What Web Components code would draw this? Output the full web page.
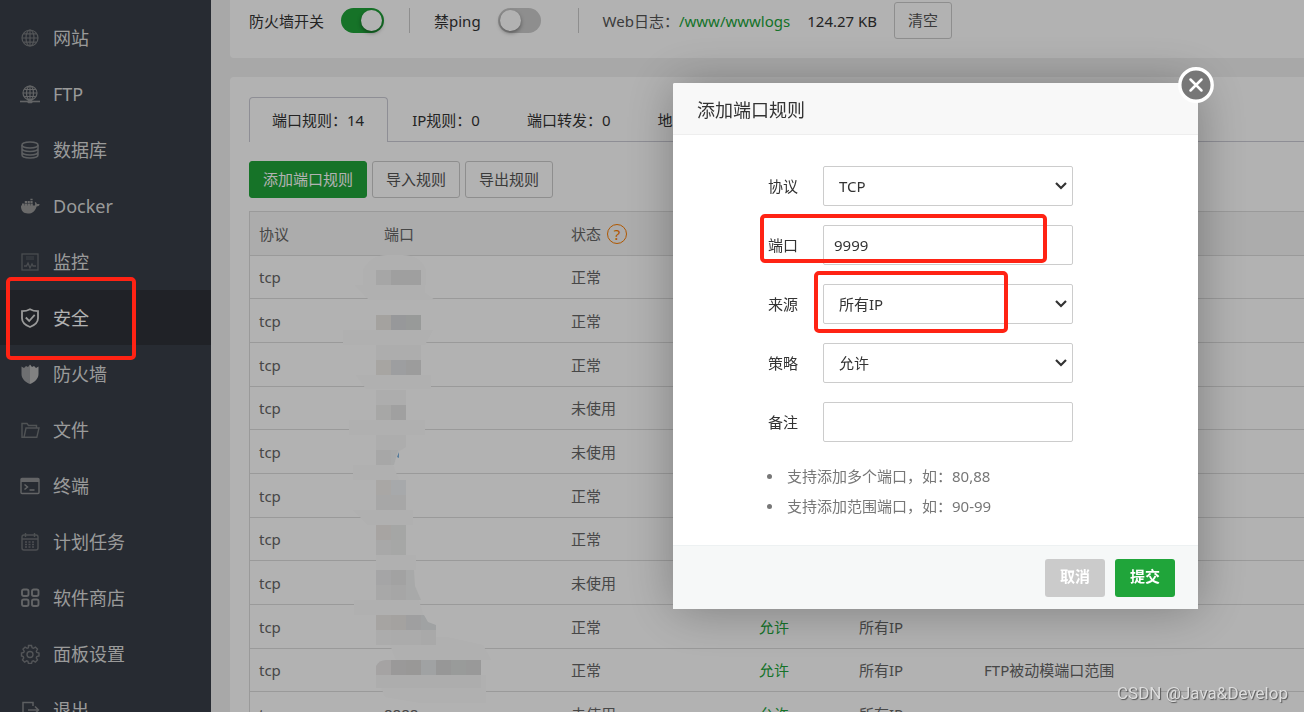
<!DOCTYPE html>
<html lang="zh-CN">
<head>
<meta charset="utf-8">
<title>安全</title>
<style>
    body {
        margin: 0;
        height: 100vh;
        overflow: hidden;
        background: #f1f1f1;
        color: #333;
        font: 15px/20px "Noto Sans", "Noto Sans CJK SC", sans-serif;
    }

    .layout {
        display: flex;
        height: 100%;
    }

    main {
        flex: 1;
        min-width: 0;
        display: flex;
        flex-direction: column;
        gap: 19px;
        padding-left: 19px;
    }

    .panel {
        flex: 1;
        background: #fff;
        border-radius: 4px 0 0 0;
        padding: 20px 0 0 19px;
    }

    .tools {
        display: flex;
        gap: 5px;
        padding: 19px 0 13px;
    }

    .mask {
        position: fixed;
        inset: 0;
        background: rgba(0, 0, 0, 0.3);
    }
</style>
</head>
<body>
<div class="layout">
    <side-nav></side-nav>
    <main>
        <firewall-bar></firewall-bar>
        <section class="panel">
            <tab-bar></tab-bar>
            <div class="tools">
                <bt-button primary>添加端口规则</bt-button>
                <bt-button>导入规则</bt-button>
                <bt-button>导出规则</bt-button>
            </div>
            <rule-table></rule-table>
        </section>
    </main>
</div>
<div class="mask"></div>
<layer-dialog heading="添加端口规则">
    <form-line name="协议" type="select" value="TCP"></form-line>
    <form-line name="端口" type="text" value="9999"></form-line>
    <form-line name="来源" type="select" value="所有IP"></form-line>
    <form-line name="策略" type="select" value="允许"></form-line>
    <form-line name="备注" type="text" value=""></form-line>
    <tip-list slot="tips"></tip-list>
</layer-dialog>
<mark-box x="6" y="277" w="130" h="83"></mark-box>
<mark-box x="760" y="214" w="287" h="49"></mark-box>
<mark-box x="814" y="271" w="194" h="62"></mark-box>
<water-mark>CSDN @Java&amp;Develop</water-mark>

<script>
"use strict";
{
    /** 20x20 icons of the side menu */
    const icons = {
        site: `<g stroke-width="1.2"><circle cx="10" cy="10" r="8"/><ellipse cx="10" cy="10" rx="4" ry="8"/><path d="M10 2v16M2 10h16M3.5 5.8h13M3.5 14.2h13"/></g>`,
        ftp: `<g stroke-width="1.2"><circle cx="10" cy="9" r="7"/><ellipse cx="10" cy="9" rx="3.5" ry="7"/><path d="M10 2v14M3 9h14M4.2 5.5h11.6M4.2 12.5h11.6"/></g><path d="M0 17.5h20" stroke-width="1.6"/><rect x="7.5" y="16" width="5" height="3.2" rx="1" fill="currentColor" stroke="none"/>`,
        database: `<g stroke-width="1.5"><ellipse cx="10" cy="5" rx="8" ry="3"/><path d="M2 5v10c0 1.7 3.6 3 8 3s8-1.3 8-3V5M2 8.5c0 1.7 3.6 3 8 3s8-1.3 8-3M2 12c0 1.7 3.6 3 8 3s8-1.3 8-3"/></g>`,
        docker: `<path fill="currentColor" stroke="none" d="M1 9.6h13.8c.6-.8.5-2-.1-2.900l.9-.6c.8.6 1.2 1.3 1.3 2.100 1-.2 2-.1 2.900.4-.6 1.300-1.700 1.800-3.200 1.800C15.200 15 12.600 17.500 8 17.500c-4.500 0-7.200-2.300-7-7.900zM2 7.400h2.400v2.400H2zM4.800 7.400h2.400v2.400H4.800zM7.600 7.400H10v2.400H7.600zM10.400 7.400h2.400v2.400h-2.400zM4.800 4.900H7v2H4.800zM7.600 4.900h2.200v2H7.600zM10.400 4.900h2.200v2h-2.200zM10.400 2.800h2.200v1.500h-2.200z"/>`,
        monitor: `<g stroke-width="1.3"><rect x="2" y="2" width="16" height="16"/><path d="M6 5h8M6 7h8" stroke-opacity=".5"/><path d="M4 14h2.500l1.500-3 2 5 2-4 1 2h3"/></g>`,
        safe: `<g stroke-width="1.8"><path d="M10 1.200c2.300 1.400 5 2 8 2v7c0 4.200-4 7.200-8 8.800-4-1.600-8-4.600-8-8.800v-7c3 0 5.700-.6 8-2z"/><path d="M5.800 9.500l3.400 3.500 5.500-6.200"/></g>`,
        wall: `<g fill="currentColor" stroke="none"><path opacity=".78" d="M10 .5V20C5 18 1.500 14.500 1.500 10V2.500L4 4l2-2 2 1z"/><path d="M10 .5V20c5-2 8.500-5.500 8.500-10V2.500L16 4l-2-2-2 1z"/></g>`,
        files: `<path stroke-width="1.4" d="M4 17.300H2V3.500h5l1.500 2h8V8M4 17.300L6 8h13l-2.200 9.300z"/>`,
        terminal: `<rect x="1" y="2.500" width="18" height="15" rx="1" stroke-width="1.4"/><path d="M1 2.500h18V6H1z" fill="currentColor" stroke="none"/><path d="M4.500 8.500l3 2.500-3 2.500M9.500 14h5" stroke-width="1.500"/>`,
        cron: `<g stroke-width="1.4"><rect x="2" y="3" width="16" height="15" rx="2"/><path d="M2 7h16M5.500 1v4M14.500 1v4"/><path stroke-dasharray="2 1.500" d="M5 10h10.500M5 12.500h10.500M5 15h10.500"/></g>`,
        soft: `<g stroke-width="1.900"><rect x="2" y="1.500" width="6.500" height="6.500" rx="1.700"/><rect x="12" y="1.500" width="6.500" height="6.500" rx="1.700"/><rect x="2" y="11.500" width="6.500" height="6.500" rx="1.700"/><rect x="12" y="11.500" width="6.500" height="6.500" rx="1.700"/></g>`,
        config: `<g stroke-width="1.400"><path d="M8.500 1.500h3l.6 2.300 1.300.5 2-1.200 2.100 2.100-1.200 2 .5 1.300 2.200.500v3l-2.200.6-.5 1.300 1.200 2-2.100 2.100-2-1.200-1.300.5-.6 2.200h-3l-.6-2.200-1.300-.5-2 1.200-2.100-2.100 1.200-2-.5-1.300L1.500 12V9l2.200-.5.5-1.300-1.200-2 2.100-2.100 2 1.200 1.300-.5z"/><circle cx="10" cy="10.500" r="3"/></g>`,
        exit: `<path stroke-width="1.500" d="M13 6V2.500H3v15h10V14M8 10h10M15 6.500l3.500 3.500-3.500 3.500"/>`,
    };

    const menu = [
        ["site", "网站", "#787b7e"],
        ["ftp", "FTP", "#8e9092"],
        ["database", "数据库", "#85888b"],
        ["docker", "Docker", "#999"],
        ["monitor", "监控", "#6a6e73"],
        ["safe", "安全", "#ddd"],
        ["wall", "防火墙", "#bbb"],
        ["files", "文件", "#73777a"],
        ["terminal", "终端", "#8e9092"],
        ["cron", "计划任务", "#6e7276"],
        ["soft", "软件商店", "#8e9092"],
        ["config", "面板设置", "#777a7e"],
        ["exit", "退出", "#85888b"],
    ];

    class SideNav extends HTMLElement {
        constructor() {
            super();
            const active = "safe";
            this.attachShadow({ mode: "open" }).innerHTML = /* html */ `
                <style>
                    :host {
                        display: block;
                        flex: 0 0 211px;
                        background: #383e48;
                        overflow: hidden;
                    }
                    nav {
                        display: flex;
                        flex-direction: column;
                        gap: 1px;
                        padding-top: 10px;
                    }
                    a {
                        display: flex;
                        align-items: center;
                        gap: 13px;
                        flex: none;
                        height: 55px;
                        padding-left: 20px;
                        color: #ddd;
                        font-size: 18px;
                        line-height: 24px;
                        text-decoration: none;
                    }
                    a.active {
                        background: #2e3238;
                        color: #fff;
                    }
                </style>
                <nav>
                    ${menu
                        .map(
                            ([icon, text, color]) => `
                    <a href="#${icon}" class="${icon === active ? "active" : ""}">
                        <svg width="20" height="20" viewBox="0 0 20 20" fill="none" stroke="currentColor" style="color: ${color}">${icons[icon]}</svg>
                        <span>${text}</span>
                    </a>`,
                        )
                        .join("")}
                </nav>
            `;
        }
    }

    class ToggleSwitch extends HTMLElement {
        constructor() {
            super();
            const checked = this.hasAttribute("on") ? "checked" : "";
            this.attachShadow({ mode: "open" }).innerHTML = /* html */ `
                <style>
                    :host { display: block; }
                    label {
                        display: flex;
                        align-items: center;
                        gap: 17px;
                    }
                    input {
                        appearance: none;
                        display: flex;
                        width: 43px;
                        height: 25px;
                        margin: 0;
                        padding: 2px;
                        box-sizing: border-box;
                        border-radius: 13px;
                        background: #ccc;
                    }
                    input::before {
                        content: "";
                        width: 21px;
                        height: 21px;
                        border-radius: 50%;
                        background: #fff;
                        box-shadow: 0 2px 4px rgba(0, 0, 0, 0.4);
                    }
                    input:checked {
                        background: #20a53a;
                        justify-content: flex-end;
                    }
                </style>
                <label><slot></slot><input type="checkbox" ${checked}></label>
            `;
        }
    }

    class BtButton extends HTMLElement {
        constructor() {
            super();
            this.attachShadow({ mode: "open" }).innerHTML = /* html */ `
                <style>
                    :host { display: block; }
                    button {
                        display: block;
                        height: 37px;
                        padding: 0 13px 2px;
                        border: 1px solid #ccc;
                        border-radius: 3px;
                        background: #fff;
                        color: #555;
                        font: inherit;
                        white-space: nowrap;
                    }
                    :host([primary]) button {
                        border-color: #20a53a;
                        background: #20a53a;
                        color: #fff;
                    }
                </style>
                <button type="button"><slot></slot></button>
            `;
        }
    }

    class FirewallBar extends HTMLElement {
        constructor() {
            super();
            this.attachShadow({ mode: "open" }).innerHTML = /* html */ `
                <style>
                    :host {
                        display: flex;
                        align-items: center;
                        padding: 2px 0 19px 19px;
                        border-radius: 0 0 0 4px;
                        background: #fff;
                        white-space: nowrap;
                    }
                    .line {
                        width: 1px;
                        height: 25px;
                        margin: 0 24px 0 25px;
                        background: #ccc;
                    }
                    .wide { margin-left: 37px; }
                    a {
                        color: #20a53a;
                        text-decoration: none;
                        margin-right: 17px;
                    }
                    .size { margin-right: 17px; }
                    .log { color: #555; }
                </style>
                <toggle-switch on>防火墙开关</toggle-switch>
                <span class="line"></span>
                <toggle-switch>禁ping</toggle-switch>
                <span class="line wide"></span>
                <span class="log">Web日志：</span>
                <a href="#logs">/www/wwwlogs</a>
                <span class="size">124.27 KB</span>
                <bt-button>清空</bt-button>
            `;
        }
    }

    class TabBar extends HTMLElement {
        constructor() {
            super();
            const tabs = ["端口规则：14", "IP规则：0", "端口转发：0", "地"];
            this.attachShadow({ mode: "open" }).innerHTML = /* html */ `
                <style>
                    :host {
                        display: flex;
                        box-shadow: inset 0 -1px #ccccd6;
                    }
                    button {
                        height: 45px;
                        padding: 0 23px 0 24px;
                        border: 0;
                        background: none;
                        color: #333;
                        font: inherit;
                        white-space: nowrap;
                    }
                    button.on {
                        padding: 0 23px 0 22px;
                        border: 1px solid #ccccd6;
                        border-bottom: 0;
                        border-radius: 4px 4px 0 0;
                        background: #fff;
                    }
                </style>
                ${tabs.map((t, i) => `<button type="button" class="${i ? "" : "on"}">${t}</button>`).join("")}
            `;
        }
    }

    const ON = "正常";
    const OFF = "未使用";
    const rows = [
        [ON], [ON], [ON], [OFF], [OFF], [ON], [ON], [OFF],
        [ON, "", "允许", "所有IP"],
        [ON, "", "允许", "所有IP", "FTP被动模端口范围"],
        [OFF, "8888", "允许", "所有IP"],
    ];

    // 15px squares over the port numbers: column, row, colour
    const mosaic = [
        [0, 0, "#eeeeee"], [1, 0, "#e4e4e4"], [2, 0, "#e4e4e4"],
        [0, 3, "#ebe8e4"], [1, 3, "#d8dadd"], [2, 3, "#dadddb"],
        [0, 6, "#efece9"], [1, 6, "#e1e3e5"], [2, 6, "#e0e0e0"],
        [0, 9, "#f0f0ee"], [1, 9, "#e6e6e6"],
        [0, 12, "#f0f0f0"],
        [0, 14, "#f3efec"], [1, 14, "#f0f2f5"], [0, 15, "#efefef"], [1, 15, "#efefef"],
        [0, 17, "#efebe9"], [1, 17, "#eceeed"], [0, 18, "#f1f1f1"], [1, 18, "#eeefee"],
        [0, 20, "#ededee"], [1, 20, "#e9e9e9"], [0, 21, "#f1f1f1"], [1, 21, "#eeeeee"],
        [0, 23, "#eeebe9"], [1, 23, "#ebe8e5"], [2, 23, "#e4e4e5"],
        [0, 24, "#f6f6f6"], [1, 24, "#f5f5f5"], [2, 24, "#f5f5f5"], [3, 24, "#f3f3f3"],
        [1, 26, "#dddcdb"], [2, 26, "#dcdad8"], [3, 26, "#e6e8ea"], [4, 26, "#d8d8d8"], [5, 26, "#dcdfdd"], [6, 26, "#dcdcdc"],
    ];

    class RuleTable extends HTMLElement {
        constructor() {
            super();
            this.attachShadow({ mode: "open" }).innerHTML = /* html */ `
                <style>
                    :host {
                        display: block;
                        position: relative;
                    }
                    table {
                        width: 100%;
                        table-layout: fixed;
                        border-collapse: separate;
                        border-spacing: 0;
                        border: solid #ddd;
                        border-width: 1px 0 0 1px;
                        color: #666;
                    }
                    th, td {
                        box-sizing: border-box;
                        height: 44px;
                        padding: 0 0 0 9px;
                        border-bottom: 1px solid #ddd;
                        text-align: left;
                        font-weight: normal;
                        white-space: nowrap;
                    }
                    th { background: #f6f6f6; }
                    /* 131px for every three rows */
                    tbody tr:nth-child(3n + 1) td { height: 43px; }
                    td:nth-child(4) { color: #20a53a; }
                    .head {
                        display: flex;
                        align-items: center;
                        gap: 6px;
                    }
                    .ask {
                        width: 18px;
                        height: 18px;
                        border: 1px solid #fb7d00;
                        border-radius: 50%;
                        color: #fb7d00;
                        line-height: 18px;
                        text-align: center;
                        text-decoration: none;
                    }
                    svg {
                        position: absolute;
                        left: 94px;
                        top: 44px;
                    }
                </style>
                <table>
                    <colgroup>
                        <col style="width: 125px"><col style="width: 187px"><col style="width: 188px">
                        <col style="width: 100px"><col style="width: 125px"><col>
                    </colgroup>
                    <thead>
                        <tr>
                            <th>协议</th>
                            <th>端口</th>
                            <th><span class="head">状态<a class="ask" href="#help">?</a></span></th>
                            <th></th><th></th><th></th>
                        </tr>
                    </thead>
                    <tbody>
                        ${rows
                            .map(
                                ([state, port = "", policy = "", source = "", note = ""]) =>
                                    `<tr><td>tcp</td><td>${port}</td><td>${state}</td><td>${policy}</td><td>${source}</td><td>${note}</td></tr>`,
                            )
                            .join("")}
                    </tbody>
                </table>
                <svg width="160" height="450" viewBox="343 255 160 450">
                    <g fill="#fcfcfc">
                        <path d="M363 270q8-15 24-15h15q18 0 24 15v15h-63z"/>
                        <path d="M355 285h70v8l10 7h-66q-8-8-14-15z"/>
                        <path d="M340 330h93l-8 15h-82z"/>
                        <path d="M356 375h75v14h-65z"/>
                        <path d="M349 420h76v15h-76z"/>
                        <path d="M353 465h40l6 15h-46z"/>
                        <path d="M353 510h60v15h-45z"/>
                        <path d="M376 555h40v15h-40z"/>
                        <path d="M354 600h65l4 15h-69z"/>
                        <path d="M387 637h60l36 8 8 15h-95z"/>
                        <path d="M376 675h110v28h-65l-36-6z"/>
                    </g>
                    <path fill="#f8f8f8" d="M376 345h45v15h-45zM376 390h30v15h-30zM376 435h30v12l-8 5-5 13h-17zM376 675h105v13H376z"/>
                    ${mosaic
                        .map(([c, r, color]) => `<rect x="${376 + c * 15}" y="${270 + r * 15}" width="15" height="15" fill="${color}"/>`)
                        .join("")}
                    <path fill="#f1f3f2" d="M391 450h7l-4 15h-3zM406 570h8l1 16 6 14h-15z"/>
                    <path fill="#e5e8ea" d="M421 615h3l4 7 8 3v5h-15z"/>
                    <path fill="#eceaea" d="M376 675v-9q3-6 10-6h5v15z"/>
                    <path fill="#7ab0dd" d="M397 457l2-5v6z"/>
                </svg>
            `;
        }
    }

    class LayerDialog extends HTMLElement {
        constructor() {
            super();
            this.attachShadow({ mode: "open" }).innerHTML = /* html */ `
                <style>
                    :host {
                        display: block;
                        position: fixed;
                        left: 673px;
                        top: 83px;
                        width: 525px;
                        border-radius: 2px;
                        background: #fff;
                        box-shadow: 1px 1px 50px rgba(0, 0, 0, 0.3);
                    }
                    h2 {
                        margin: 0;
                        padding: 15px 24px 12px;
                        border-bottom: 1px solid #eee;
                        border-radius: 2px 2px 0 0;
                        background: #f8f8f8;
                        font-size: 18px;
                        font-weight: normal;
                        line-height: 24px;
                    }
                    form {
                        display: flex;
                        flex-direction: column;
                        gap: 19px;
                        padding: 31px 0 24px;
                    }
                    footer {
                        display: flex;
                        justify-content: flex-end;
                        gap: 10px;
                        padding: 13px 23px 12px;
                        border-top: 1px solid #edf1f2;
                        background: #f6f8f8;
                    }
                    footer button {
                        width: 60px;
                        height: 38px;
                        padding: 0 0 4px;
                        border: 0;
                        border-radius: 3px;
                        background: #cbcbcb;
                        color: #fff;
                        font: inherit;
                        font-weight: bold;
                    }
                    footer .ok { background: #20a53a; }
                    .close {
                        position: absolute;
                        right: -16px;
                        top: -16px;
                        width: 36px;
                        height: 36px;
                        padding: 0;
                        border: 0;
                        background: none;
                    }
                    .close svg { display: block; }
                </style>
                <h2>${this.getAttribute("heading")}</h2>
                <form>
                    <slot></slot>
                    <slot name="tips"></slot>
                </form>
                <footer>
                    <button type="button">取消</button>
                    <button type="button" class="ok">提交</button>
                </footer>
                <button type="button" class="close" aria-label="关闭">
                    <svg width="36" height="36" viewBox="0 0 36 36" fill="none" stroke="#fff">
                        <circle cx="18" cy="18" r="16.200" fill="#777" stroke-width="3.400"/>
                        <path d="M12.500 12.500l11 11M23.500 12.500l-11 11" stroke-width="2.500" stroke-linecap="round"/>
                    </svg>
                </button>
            `;
        }
    }

    const chevron = `url("data:image/svg+xml,%3Csvg xmlns='http://www.w3.org/2000/svg' width='12' height='8' fill='none' stroke='%23333' stroke-width='2.2'%3E%3Cpath d='M1 1l5 5 5-5'/%3E%3C/svg%3E")`;

    class FormLine extends HTMLElement {
        constructor() {
            super();
            const value = this.getAttribute("value");
            const control =
                this.getAttribute("type") === "select"
                    ? `<select id="field"><option>${value}</option></select>`
                    : `<input id="field" type="text" value="${value}">`;
            this.attachShadow({ mode: "open" }).innerHTML = /* html */ `
                <style>
                    :host {
                        display: flex;
                        align-items: center;
                        gap: 25px;
                    }
                    label {
                        width: 125px;
                        text-align: right;
                    }
                    input, select {
                        box-sizing: border-box;
                        width: 250px;
                        height: 40px;
                        margin: 0;
                        padding: 0 10px;
                        border: 1px solid #ccc;
                        border-radius: 2px;
                        background: #fff;
                        color: #333;
                        font: inherit;
                    }
                    select {
                        appearance: none;
                        padding: 0 20px 0 15px;
                        background: #fff ${chevron} no-repeat right 5px center;
                    }
                </style>
                <label for="field">${this.getAttribute("name")}</label>
                ${control}
            `;
        }
    }

    class TipList extends HTMLElement {
        constructor() {
            super();
            this.attachShadow({ mode: "open" }).innerHTML = /* html */ `
                <style>
                    :host { display: block; }
                    ul {
                        margin: 0;
                        padding-left: 94px;
                        color: #777;
                        line-height: 30px;
                        list-style: none;
                    }
                    li {
                        display: flex;
                        align-items: center;
                        gap: 15px;
                    }
                    li::before {
                        content: "";
                        width: 5px;
                        height: 5px;
                        border-radius: 50%;
                        background: #777;
                    }
                </style>
                <ul>
                    <li>支持添加多个端口，如：80,88</li>
                    <li>支持添加范围端口，如：90-99</li>
                </ul>
            `;
        }
    }

    /** Red frame drawn over the page */
    class MarkBox extends HTMLElement {
        constructor() {
            super();
            const px = (name) => this.getAttribute(name) + "px";
            this.attachShadow({ mode: "open" }).innerHTML = /* html */ `
                <style>
                    :host {
                        position: fixed;
                        left: ${px("x")};
                        top: ${px("y")};
                        width: ${px("w")};
                        height: ${px("h")};
                        box-sizing: border-box;
                        border: 4px solid #ff2314;
                        border-radius: 5px;
                        pointer-events: none;
                    }
                </style>
            `;
        }
    }

    class WaterMark extends HTMLElement {
        constructor() {
            super();
            this.attachShadow({ mode: "open" }).innerHTML = /* html */ `
                <style>
                    :host {
                        position: fixed;
                        right: 16px;
                        bottom: 9px;
                        color: #ddd;
                        font: 17px/20px Roboto, "Liberation Sans", sans-serif;
                        text-shadow: 1px 1px 1px #555;
                    }
                </style>
                <slot></slot>
            `;
        }
    }

    customElements.define("side-nav", SideNav);
    customElements.define("toggle-switch", ToggleSwitch);
    customElements.define("bt-button", BtButton);
    customElements.define("firewall-bar", FirewallBar);
    customElements.define("tab-bar", TabBar);
    customElements.define("rule-table", RuleTable);
    customElements.define("layer-dialog", LayerDialog);
    customElements.define("form-line", FormLine);
    customElements.define("tip-list", TipList);
    customElements.define("mark-box", MarkBox);
    customElements.define("water-mark", WaterMark);
}
</script>
</body>
</html>
